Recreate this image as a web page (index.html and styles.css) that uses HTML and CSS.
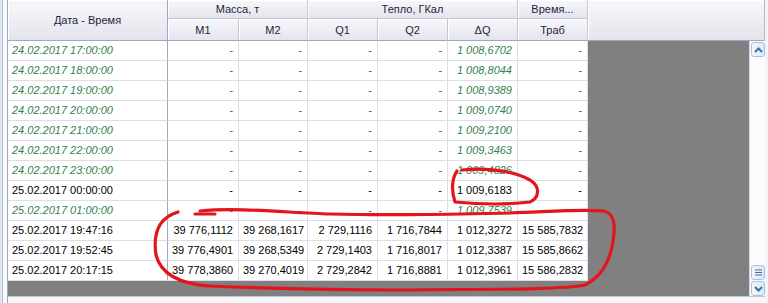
FILE: index.html
```html
<!DOCTYPE html>
<html lang="ru">

<head>
    <meta charset="UTF-8">
    <title>Архив</title>
    <link rel="stylesheet" href="styles.css">
</head>

<body>
    <div class="frame">
        <div class="gutter"></div>
        <div class="grid">
            <div class="head">
                <div class="hcell date">Дата - Время</div>
                <div class="hcell span2">Масса, т</div>
                <div class="hcell span3">Тепло, ГКал</div>
                <div class="hcell">Время...</div>
                <div class="hcell filler"></div>
                <div class="hcell">M1</div>
                <div class="hcell">M2</div>
                <div class="hcell">Q1</div>
                <div class="hcell">Q2</div>
                <div class="hcell">ΔQ</div>
                <div class="hcell">Траб</div>
            </div>
            <div class="body">
                <div class="rows">
                    <div class="row calc"><span>24.02.2017 17:00:00</span><span>-</span><span>-</span><span>-</span><span>-</span><span>1 008,6702</span><span>-</span></div>
                    <div class="row calc"><span>24.02.2017 18:00:00</span><span>-</span><span>-</span><span>-</span><span>-</span><span>1 008,8044</span><span>-</span></div>
                    <div class="row calc"><span>24.02.2017 19:00:00</span><span>-</span><span>-</span><span>-</span><span>-</span><span>1 008,9389</span><span>-</span></div>
                    <div class="row calc"><span>24.02.2017 20:00:00</span><span>-</span><span>-</span><span>-</span><span>-</span><span>1 009,0740</span><span>-</span></div>
                    <div class="row calc"><span>24.02.2017 21:00:00</span><span>-</span><span>-</span><span>-</span><span>-</span><span>1 009,2100</span><span>-</span></div>
                    <div class="row calc"><span>24.02.2017 22:00:00</span><span>-</span><span>-</span><span>-</span><span>-</span><span>1 009,3463</span><span>-</span></div>
                    <div class="row calc"><span>24.02.2017 23:00:00</span><span>-</span><span>-</span><span>-</span><span>-</span><span>1 009,4826</span><span>-</span></div>
                    <div class="row"><span>25.02.2017 00:00:00</span><span>-</span><span>-</span><span>-</span><span>-</span><span>1 009,6183</span><span>-</span></div>
                    <div class="row calc"><span>25.02.2017 01:00:00</span><span>-</span><span>-</span><span>-</span><span>-</span><span>1 009,7539</span><span>-</span></div>
                    <div class="row"><span>25.02.2017 19:47:16</span><span>39 776,1112</span><span>39 268,1617</span><span>2 729,1116</span><span>1 716,7844</span><span>1 012,3272</span><span>15 585,7832</span></div>
                    <div class="row"><span>25.02.2017 19:52:45</span><span>39 776,4901</span><span>39 268,5349</span><span>2 729,1403</span><span>1 716,8017</span><span>1 012,3387</span><span>15 585,8662</span></div>
                    <div class="row"><span>25.02.2017 20:17:15</span><span>39 778,3860</span><span>39 270,4019</span><span>2 729,2842</span><span>1 716,8881</span><span>1 012,3961</span><span>15 586,2832</span></div>
                </div>
                <div class="empty"></div>
                <div class="scrollbar">
                    <div class="sbtn">
                        <svg width="9" height="6" viewBox="0 0 9 6"><path d="M1 5 L4.5 1.5 L8 5" /></svg>
                    </div>
                    <div class="track"></div>
                    <div class="sbtn thumb">
                        <svg width="9" height="7" viewBox="0 0 9 7"><path d="M1 1 H8 M1 3.5 H8 M1 6 H8" /></svg>
                    </div>
                    <div class="sbtn down">
                        <svg width="9" height="6" viewBox="0 0 9 6"><path d="M1 1 L4.5 4.5 L8 1" /></svg>
                    </div>
                </div>
            </div>
            <div class="foot"></div>
        </div>
        <div class="edge"></div>
    </div>

    <!-- hand-drawn marks over the grid -->
    <svg class="marks" width="768" height="303" viewBox="0 0 768 303">
        <path d="M462 170 C490 167 516 172 530 180 C541 187 539 198 530 202 C505 205 476 204 455 202 C451 190 452 178 457 171" />
        <path d="M195 214 L215 214" />
        <path d="M200 211 C240 207 290 213 330 214 C400 216 450 214 510 213 C545 212 580 209 604 211 C616 214 615 228 613 242 C610 260 603 276 585 285 C560 290 480 289 400 290 C320 290 260 288 210 286 C180 284 161 275 156 255 C153 235 158 218 178 212" />
    </svg>
</body>

</html>
```

FILE: styles.css
```css
:root {
    --font: "Liberation Sans", Arial, sans-serif;
    --text: #000;
    --head-text: #1e1e3c;
    --line: #dcdde6;
    --head-line: #c3c6d6;
    --green: #348250;
    --gray: #808080;
}

body {
    margin: 0;
    width: 768px;
    height: 303px;
    overflow: hidden;
    background-color: #f3f4f8;
    font-family: var(--font);
    font-size: 11px;
    color: var(--text);
}

.frame {
    display: flex;
    height: 303px;
}

.gutter {
    width: 8px;
    box-sizing: border-box;
    background-color: #f9fafc;
    border-left: 2px solid #e2e7ef;
    box-shadow: inset 1px 0 0 #a9bbd4;
    border-right: 1px solid #a3a7bb;
}

.edge {
    width: 3px;
    background-color: #f3f4f8;
}

.grid {
    width: 757px;
    display: flex;
    flex-direction: column;
}

.head {
    display: grid;
    grid-template-columns: 160px 71px 69px 70px 70px 70px 70px 1fr;
    grid-template-rows: 19px 22px;
    height: 41px;
}

.hcell {
    box-sizing: border-box;
    background: linear-gradient(#f8f8fb, #e3e4ed);
    border-right: 1px solid var(--head-line);
    border-bottom: 1px solid var(--head-line);
    box-shadow: inset 1px 1px 0 #fff;
    color: var(--head-text);
    display: flex;
    align-items: center;
    justify-content: center;
    white-space: nowrap;
}

.hcell.date {
    grid-row: span 2;
    border-right-color: #a2a6c0;
    border-bottom-color: #a2a6c0;
}

.span2 {
    grid-column: span 2;
}

.span3 {
    grid-column: span 3;
}

.filler {
    grid-row: span 2;
    border-right: 1px solid #b4b8cc;
    border-bottom-color: #a2a6c0;
}

.head .hcell:nth-child(n+6) {
    border-bottom-color: #a2a6c0;
    padding-top: 1px;
}

.body {
    display: flex;
    height: 256px;
    background-color: var(--gray);
}

.rows {
    width: 580px;
}

.row {
    display: grid;
    grid-template-columns: 160px 71px 69px 70px 70px 70px 70px;
    height: 20px;
    background-color: #fff;
}

.row>span {
    box-sizing: border-box;
    border-right: 1px solid var(--line);
    border-bottom: 1px solid var(--line);
    padding: 0 5px 0 4px;
    line-height: 19px;
    text-align: right;
    white-space: nowrap;
    overflow: hidden;
}

.row>span:first-child {
    text-align: left;
    border-right-color: #a2a6c0;
}

.row.calc {
    color: var(--green);
    font-style: italic;
}

.empty {
    flex: 1;
}

.scrollbar {
    width: 16px;
    box-sizing: border-box;
    border-left: 1px solid #d6dae4;
    background-color: #fbfcfe;
    display: flex;
    flex-direction: column;
    padding-top: 1px;
}

.sbtn {
    box-sizing: border-box;
    height: 15px;
    margin-left: 1px;
    border: 1px solid #a9c1de;
    border-radius: 3px;
    background: linear-gradient(90deg, #f4f8fd, #dce7f5);
    display: flex;
    align-items: center;
    justify-content: center;
}

.sbtn path {
    fill: none;
    stroke: #3f6fa8;
    stroke-width: 2;
}

.thumb path {
    stroke-width: 1.2;
}

.sbtn.down {
    margin-top: 1px;
}

.track {
    flex: 1;
}

.foot {
    height: 6px;
    border-top: 1px solid #c4c8d4;
    background-color: #f6f7f9;
}

.marks {
    position: absolute;
    left: 0;
    top: 0;
    pointer-events: none;
}

.marks path {
    fill: none;
    stroke: #e3141c;
    stroke-width: 3.2;
    stroke-linecap: round;
    stroke-linejoin: round;
}
```
